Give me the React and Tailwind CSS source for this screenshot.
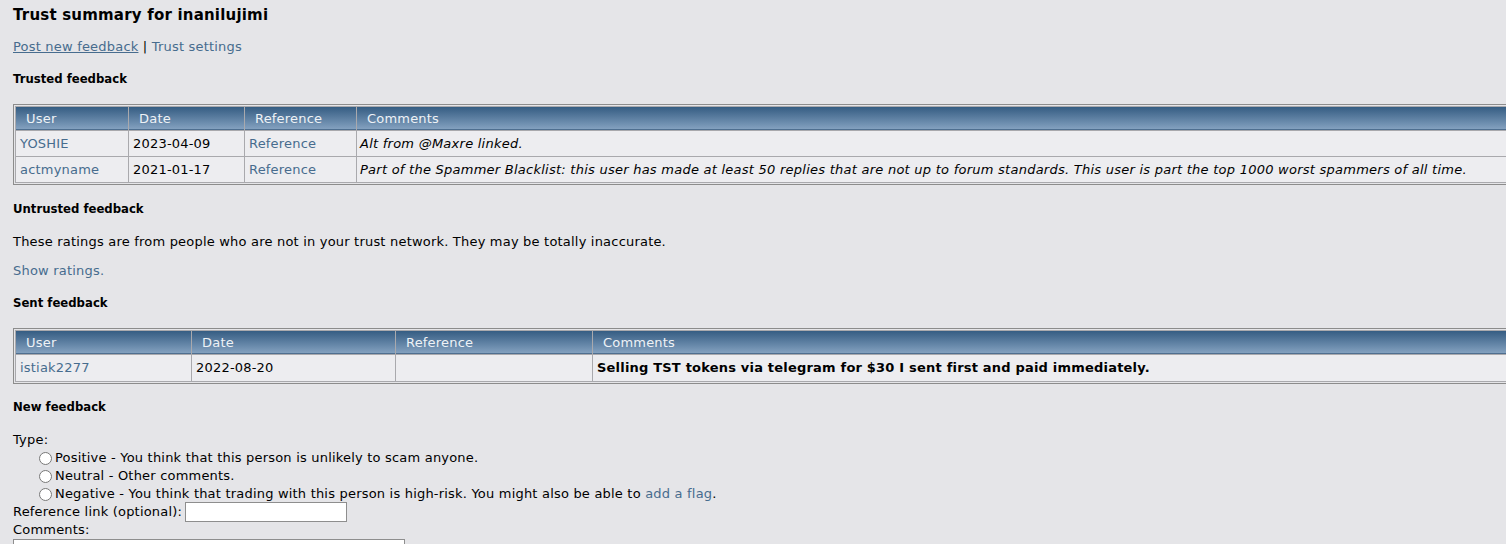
import React from "react";

const link = "text-[#476c8e]";

const trusted = [
    { user: "YOSHIE", date: "2023-04-09", comment: "Alt from @Maxre linked." },
    {
        user: "actmyname",
        date: "2021-01-17",
        comment:
            "Part of the Spammer Blacklist: this user has made at least 50 replies that are not up to forum standards. This user is part the top 1000 worst spammers of all time.",
    },
];

const th = "pl-[10px] text-left font-normal shadow-[inset_0_-1px_0_#4f6f90]";

const FeedbackTable = ({ widths, children }) => (
    <div className="w-[1540px] border border-[#8c8c8c] p-px">
        <table className="w-full border-separate border-spacing-px bg-[#a9a9ad] table-fixed">
            <colgroup>
                {widths.map((w, i) => (
                    <col key={i} style={w ? { width: w } : undefined} />
                ))}
            </colgroup>
            <thead>
                <tr className="bg-gradient-to-b from-[#355d83] to-[#87a4c2] text-[#eef2f6]">
                    <th className={`h-[23px] ${th}`}>User</th>
                    <th className={th}>Date</th>
                    <th className={th}>Reference</th>
                    <th className={th}>Comments</th>
                </tr>
            </thead>
            <tbody>{children}</tbody>
        </table>
    </div>
);

export default function App() {
    return (
        <div className="h-[544px] w-[1506px] overflow-hidden bg-[#e5e5e8] px-[13px] pt-[6px] text-[13px] tracking-[0.2px] text-black" style={{ fontFamily: '"DejaVu Sans", Verdana, sans-serif' }}>
            <h2 className="text-[15px] font-bold leading-[18px]">Trust summary for inanilujimi</h2>

            <p className="mt-[15px] leading-[16px]">
                <span className={`${link} underline`}>Post new feedback</span> | <span className={link}>Trust settings</span>
            </p>

            <h3 className="mt-[17px] text-[11.7px] font-bold leading-[15px] tracking-normal">Trusted feedback</h3>

            <div className="mt-[17px]">
                <FeedbackTable widths={[112, 115, 111, null]}>
                    {trusted.map((row, i) => (
                        <tr key={i} className="bg-[#ededf0]">
                            <td className={`h-[25px] pl-[4px] ${link}`}>{row.user}</td>
                            <td className="pl-[4px]">{row.date}</td>
                            <td className={`pl-[4px] ${link}`}>Reference</td>
                            <td className="pl-[3px] italic tracking-[0.25px] whitespace-nowrap">{row.comment}</td>
                        </tr>
                    ))}
                </FeedbackTable>
            </div>

            <h3 className="mt-[17px] text-[11.7px] font-bold leading-[15px] tracking-normal">Untrusted feedback</h3>
            <p className="mt-[17px] leading-[16px]">
                These ratings are from people who are not in your trust network. They may be totally inaccurate.
            </p>
            <p className={`mt-[13px] leading-[16px] ${link}`}>Show ratings.</p>

            <h3 className="mt-[17px] text-[11.7px] font-bold leading-[15px] tracking-normal">Sent feedback</h3>

            <div className="mt-[17px]">
                <FeedbackTable widths={[175, 203, 196, null]}>
                    <tr className="bg-[#ededf0]">
                        <td className={`h-[26px] pl-[4px] ${link}`}>istiak2277</td>
                        <td className="pl-[4px]">2022-08-20</td>
                        <td className="pl-[4px]"></td>
                        <td className="pl-[4px] font-bold whitespace-nowrap">
                            Selling TST tokens via telegram for $30 I sent first and paid immediately.
                        </td>
                    </tr>
                </FeedbackTable>
            </div>

            <h3 className="mt-[16px] text-[11.7px] font-bold leading-[15px] tracking-normal">New feedback</h3>

            <div className="mt-[16px] leading-[18px]">
                <div>Type:</div>
                <div className="pl-[26px]">
                    <label className="flex items-center">
                        <input type="radio" name="type" className="m-0 mr-[3px] h-[13px] w-[13px]" />
                        Positive - You think that this person is unlikely to scam anyone.
                    </label>
                    <label className="flex items-center">
                        <input type="radio" name="type" className="m-0 mr-[3px] h-[13px] w-[13px]" />
                        Neutral - Other comments.
                    </label>
                    <label className="flex items-center">
                        <input type="radio" name="type" className="m-0 mr-[3px] h-[13px] w-[13px]" />
                        <span>
                            Negative - You think that trading with this person is high-risk. You might also be able to{" "}
                            <span className={link}>add a flag</span>.
                        </span>
                    </label>
                </div>
                <div className="flex h-[18px] items-center">
                    Reference link (optional):
                    <input type="text" className="ml-[3px] h-[20px] w-[162px] border border-[#8e8e8e] bg-white" />
                </div>
                <div>Comments:</div>
                <textarea className="block h-[40px] w-[392px] border border-[#8e8e8e] bg-white" />
            </div>
        </div>
    );
}
